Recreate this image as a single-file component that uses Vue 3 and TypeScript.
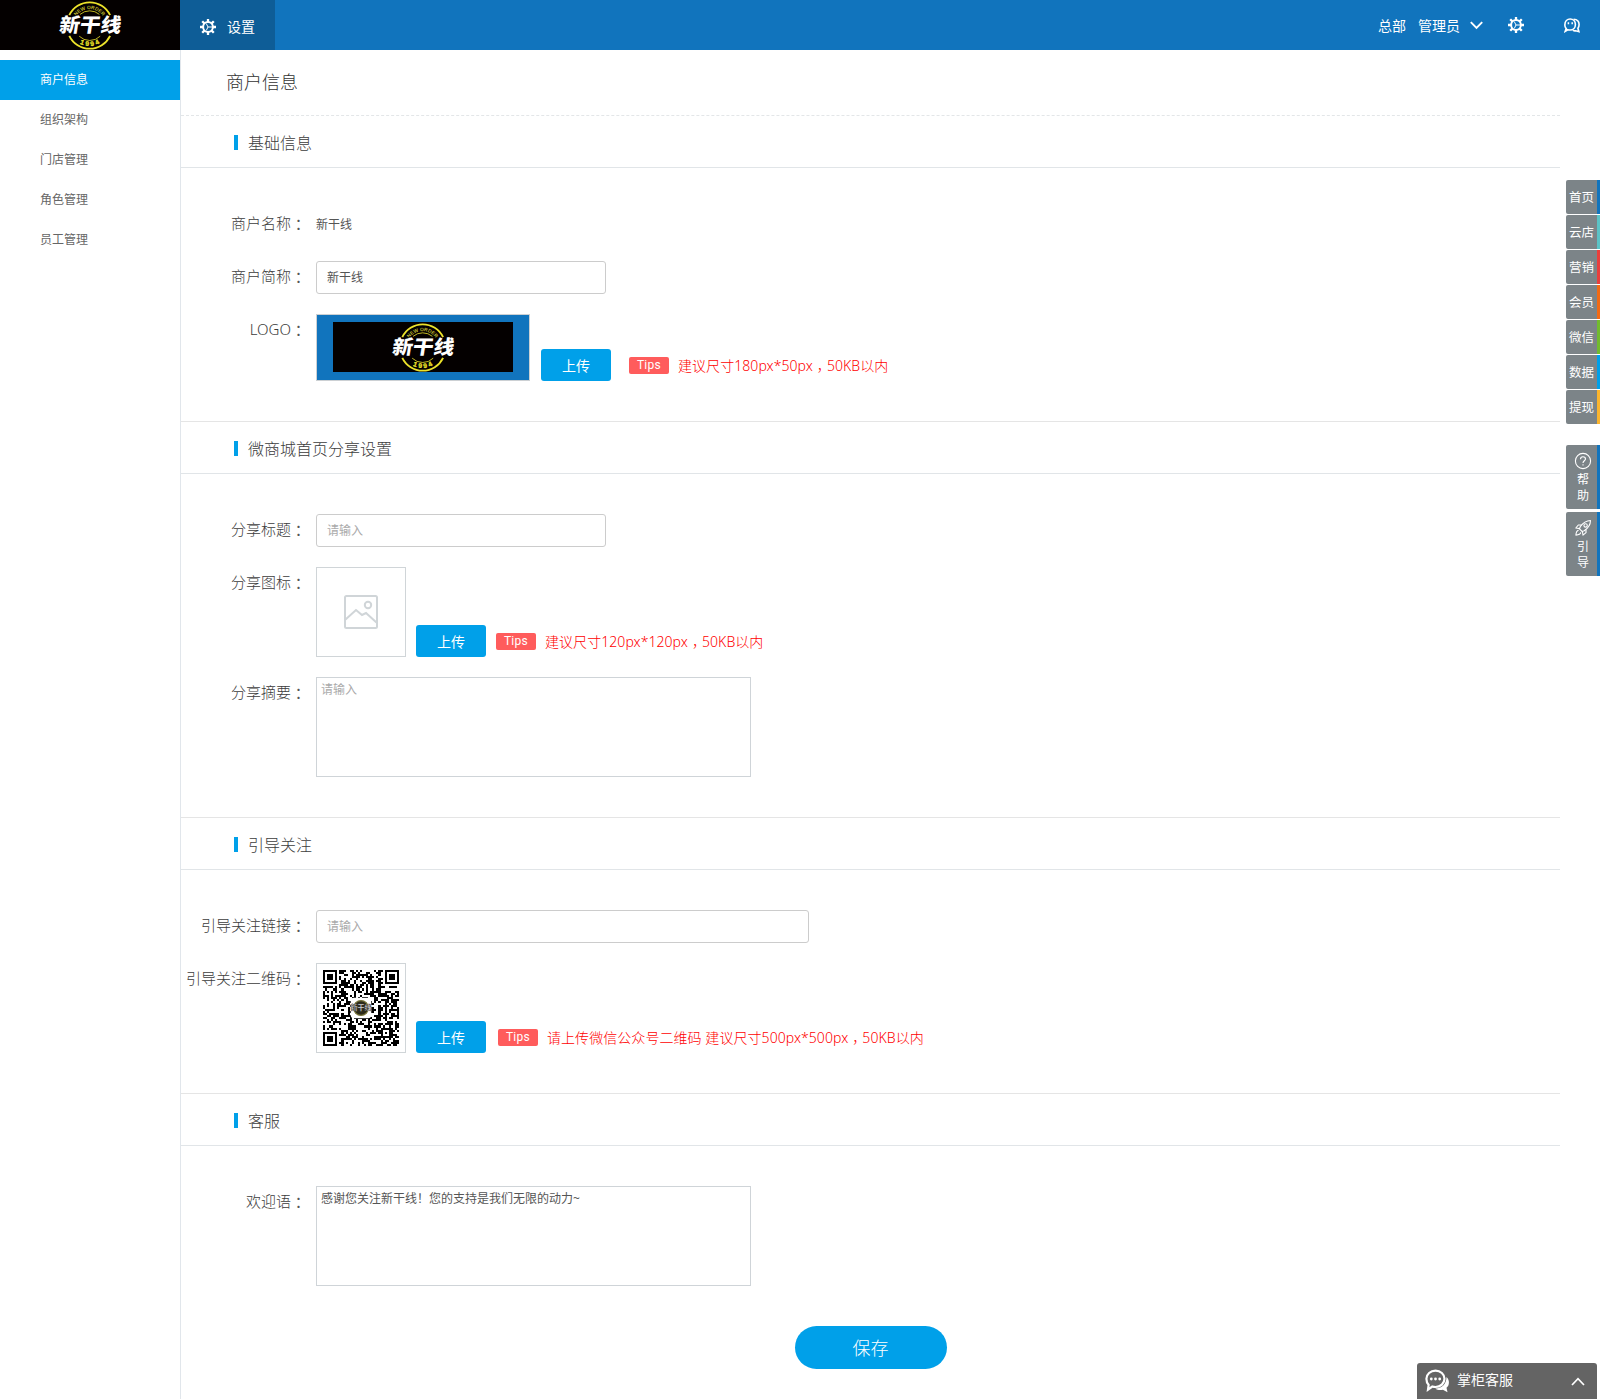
<script setup lang="ts">
import { ref } from 'vue'

interface QuickLink {
  label: string
  color: string
}

const menu: string[] = ['商户信息', '组织架构', '门店管理', '角色管理', '员工管理']
const activeMenu = ref('商户信息')

const quickLinks: QuickLink[] = [
  { label: '首页', color: '#1174bd' },
  { label: '云店', color: '#5bc3c6' },
  { label: '营销', color: '#ea3f3c' },
  { label: '会员', color: '#f26a14' },
  { label: '微信', color: '#72bb2e' },
  { label: '数据', color: '#00a0e9' },
  { label: '提现', color: '#fcb52d' },
]

const shortName = ref('新干线')
const shareTitle = ref('')
const shareSummary = ref('')
const followLink = ref('')
const welcome = ref('感谢您关注新干线！您的支持是我们无限的动力~')

const QR_SIZE = 37

function finderCell(x: number, y: number): boolean | null {
  const corners = [[0, 0], [QR_SIZE - 7, 0], [0, QR_SIZE - 7]]
  for (const [cx, cy] of corners) {
    const dx = x - cx
    const dy = y - cy
    if (dx >= -1 && dx <= 7 && dy >= -1 && dy <= 7) {
      const d = Math.max(Math.abs(dx - 3), Math.abs(dy - 3))
      return d === 3 || d <= 1
    }
  }
  const a = Math.max(Math.abs(x - 30), Math.abs(y - 30))
  if (a <= 2) return a !== 1
  return null
}

function buildQr(): string {
  let seed = 20261
  let d = ''
  for (let y = 0; y < QR_SIZE; y++) {
    for (let x = 0; x < QR_SIZE; x++) {
      seed = (seed * 1103515245 + 12345) % 2147483648
      const fixed = finderCell(x, y)
      const dark = fixed !== null ? fixed : (seed >> 12) % 100 < 51
      if (dark) d += `M${x} ${y}h1v1h-1z`
    }
  }
  return d
}

const qrPath = buildQr()
</script>

<template>
  <div class="page">
    <svg class="defs" width="0" height="0" aria-hidden="true">
      <defs>
        <path id="arc-top" d="M73.1 25.500a16.400 16.400 0 0 1 32.800 0" />
        <path id="arc-bottom" d="M68.900 25.500a20.600 20.600 0 0 0 41.200 0" />
        <symbol id="brand" viewBox="0 0 180 50">
          <rect width="180" height="50" fill="#040000" />
          <g fill="none" stroke="#ece22a">
            <path d="M69.300 15.200a22.600 22.600 0 0 1 40.800 0M69.300 35.800a22.600 22.600 0 0 0 40.800 0" stroke-width="1.900" />
            <path d="M80 14.400a15 15 0 0 1 19.400 0M79.200 36.200a15 15 0 0 0 21 0" stroke-width=".8" />
          </g>
          <text font-family="Liberation Sans, sans-serif" font-weight="700" font-size="5" fill="#bdb52c" text-anchor="middle">
            <textPath href="#arc-top" startOffset="50%">NEW ORDER</textPath>
          </text>
          <text font-family="Liberation Sans, sans-serif" font-weight="700" font-size="6.600" letter-spacing="2" fill="#ece22a" stroke="#ece22a" stroke-width=".3" text-anchor="middle">
            <textPath href="#arc-bottom" startOffset="52%">1994</textPath>
          </text>
          <text transform="translate(58.500 32.300) skewX(-9) scale(1.030 .98)" font-family="Noto Sans CJK SC, sans-serif" font-weight="900" font-size="20" fill="#fff">新干线</text>
        </symbol>
        <symbol id="gear" viewBox="0 0 16 16">
          <g fill="none" stroke="#fff">
            <circle cx="8" cy="8" r="4.900" stroke-width="2" />
            <path d="M8 0v3M8 13v3M0 8h3M13 8h3M2.200 2.200l2.200 2.200M11.600 11.600l2.200 2.200M2.200 13.800l2.200-2.200M11.600 4.400l2.200-2.200" stroke-width="2.300" />
            <path d="M6.300 4.600L8 8L6.300 11.400M8 8h4" stroke-width="1" />
          </g>
        </symbol>
      </defs>
    </svg>

    <header class="topbar">
      <svg class="brand" width="180" height="50"><use href="#brand" /></svg>
      <div class="tab">
        <svg width="16" height="16"><use href="#gear" /></svg>
        <span>设置</span>
      </div>
      <div class="account">
        <span>总部</span>
        <span class="role">管理员</span>
        <svg class="chev" width="13" height="9" viewBox="0 0 13 9"><path d="M.8 1.200l5.700 5.800 5.700-5.800" fill="none" stroke="#fff" stroke-width="1.900" /></svg>
        <svg class="gear" width="16" height="16"><use href="#gear" /></svg>
        <svg class="chat" width="16" height="15" viewBox="0 0 16 15" fill="none" stroke="#fff" stroke-width="1.600">
          <path d="M1.200 13.300l1-2.700A5.300 5.300 0 0 1 .9 6.500C.9 3.300 3.200 1 6.200 1s5.200 2.400 5.200 5.500-2.200 5.500-5.200 5.500c-.9 0-1.700 0-2.400-.3z" />
          <path d="M9.600 1.200c3.300.1 5.500 2.300 5.500 5.400 0 1.500-.5 2.800-1.200 3.700l1 3.300-3.300-.8c-1.100.2-1.900 0-2.700-.4" />
          <path d="M4.400 4.300v2M8.200 4.300v2" stroke-width="1.500" />
        </svg>
      </div>
    </header>

    <div class="layout">
      <nav class="side">
        <a v-for="item in menu" :key="item" :class="{ active: item === activeMenu }" @click="activeMenu = item">{{ item }}</a>
      </nav>

      <main class="main">
        <h1>商户信息</h1>

        <section>
          <h2 class="dashed"><i></i>基础信息</h2>
          <div class="body">
            <div class="row">
              <label>商户名称<b>：</b></label>
              <span class="plain">新干线</span>
            </div>
            <div class="row">
              <label>商户简称<b>：</b></label>
              <input v-model="shortName" type="text" />
            </div>
            <div class="row">
              <label>LOGO<b>：</b></label>
              <div class="logo-box"><svg width="180" height="50"><use href="#brand" /></svg></div>
              <button class="upload far" type="button">上传</button>
              <span class="tips wide">Tips</span>
              <span class="hint">建议尺寸180px*50px<b>，</b>50KB以内</span>
            </div>
          </div>
        </section>

        <section>
          <h2><i></i>微商城首页分享设置</h2>
          <div class="body">
            <div class="row">
              <label>分享标题<b>：</b></label>
              <input v-model="shareTitle" type="text" placeholder="请输入" />
            </div>
            <div class="row">
              <label>分享图标<b>：</b></label>
              <div class="thumb">
                <svg width="34" height="34" viewBox="0 0 34 34" fill="none" stroke="#d0d5d8" stroke-width="2">
                  <rect x="1" y="1" width="32" height="32" rx="1.500" />
                  <circle cx="24" cy="10" r="3.200" />
                  <path d="M1.500 24.500L12 15l6 5 4-2 10.500 9.500" />
                </svg>
              </div>
              <button class="upload" type="button">上传</button>
              <span class="tips">Tips</span>
              <span class="hint">建议尺寸120px*120px<b>，</b>50KB以内</span>
            </div>
            <div class="row">
              <label>分享摘要<b>：</b></label>
              <textarea v-model="shareSummary" placeholder="请输入"></textarea>
            </div>
          </div>
        </section>

        <section>
          <h2><i></i>引导关注</h2>
          <div class="body">
            <div class="row">
              <label>引导关注链接<b>：</b></label>
              <input v-model="followLink" class="long" type="text" placeholder="请输入" />
            </div>
            <div class="row">
              <label>引导关注二维码<b>：</b></label>
              <div class="thumb">
                <svg width="76" height="76" viewBox="0 0 37 37">
                  <path :d="qrPath" fill="#000" shape-rendering="crispEdges" />
                  <rect x="13.500" y="13.500" width="10" height="10" rx="1.500" fill="#fff" />
                  <circle cx="18.500" cy="18.500" r="3.600" fill="#2b2a1a" stroke="#77733a" stroke-width=".6" />
                  <text x="18.500" y="19.700" font-family="Noto Sans CJK SC, sans-serif" font-weight="900" font-size="3.400" fill="#ddd" stroke="#333" stroke-width=".15" text-anchor="middle">新干线</text>
                </svg>
              </div>
              <button class="upload" type="button">上传</button>
              <span class="tips mid">Tips</span>
              <span class="hint">请上传微信公众号二维码 建议尺寸500px*500px<b>，</b>50KB以内</span>
            </div>
          </div>
        </section>

        <section>
          <h2><i></i>客服</h2>
          <div class="body">
            <div class="row">
              <label>欢迎语<b>：</b></label>
              <textarea v-model="welcome"></textarea>
            </div>
          </div>
        </section>

        <button class="save" type="button">保存</button>
      </main>
    </div>

    <aside class="float">
      <a v-for="q in quickLinks" :key="q.label" class="quick" :style="{ borderRightColor: q.color }">{{ q.label }}</a>
      <a class="tool first">
        <svg width="18" height="18" viewBox="0 0 18 18" fill="none" stroke="#fff" stroke-width="1.100">
          <circle cx="9" cy="9" r="7.600" />
          <path d="M6.500 7.200c0-1.500 1.100-2.400 2.500-2.400s2.500.9 2.500 2.200c0 1.700-2.500 1.900-2.500 4M9 12.300v1.200" />
        </svg>
        <span>帮</span><span>助</span>
      </a>
      <a class="tool">
        <svg width="18" height="18" viewBox="0 0 18 18" fill="none" stroke="#fff" stroke-width="1.100" stroke-linejoin="round">
          <path d="M16.500 1.500c-4.300 0-7.500 2.200-10.300 6.300l-.7 2 2.700 2.700 2-.7c4.100-2.800 6.300-6 6.300-10.300z" />
          <circle cx="11.600" cy="6.400" r="1.700" />
          <path d="M7.500 6H4.300L1.800 9l3.900.6M12 10.500v3.200L9 16.200l-.6-3.900M4.600 11.200c-1.700.3-2.500 1.700-2.700 4.900 3.200-.2 4.600-1 4.900-2.700" />
        </svg>
        <span>引</span><span>导</span>
      </a>
    </aside>

    <div class="service">
      <svg width="25" height="24" viewBox="0 0 25 24">
        <path d="M21.500 8c3.500 3.500 3 8.500 0 10.800l1 4.500-4.600-2.500c-3 .5-6 .2-7.600-1.300 6.500 0 11.200-4.500 11.200-11.500z" fill="#fff" />
        <path d="M10.500 1.600c5 0 9 3.600 9 8.200s-4 8.200-9 8.200c-1.200 0-2.200-.2-3.200-.5L3 20.600l.6-4.800C2.100 14.300 1.400 12.200 1.400 9.800c0-4.600 4.100-8.200 9.100-8.200z" fill="#646464" stroke="#fff" stroke-width="2.200" />
        <g fill="#fff"><circle cx="6.300" cy="10" r="1.400" /><circle cx="10.500" cy="10" r="1.400" /><circle cx="14.700" cy="10" r="1.400" /></g>
      </svg>
      <span>掌柜客服</span>
      <svg width="14" height="9" viewBox="0 0 14 9"><path d="M1 8l6-6.300L13 8" fill="none" stroke="#fff" stroke-width="1.700" /></svg>
    </div>
  </div>
</template>

<style>
body {
  background: #fff;
}
</style>

<style scoped>
.page {
  position: relative;
  height: 1399px;
  overflow: hidden;
  color: #555;
  font-family: "Noto Sans", "Noto Sans CJK SC", sans-serif;
  font-size: 12px;
}
.page * {
  box-sizing: border-box;
}
.defs {
  position: absolute;
}
svg {
  display: block;
  flex: none;
}
.topbar {
  display: flex;
  height: 50px;
  background: #1174bd;
  color: #fff;
  font-size: 14px;
}
.tab {
  display: flex;
  align-items: center;
  width: 95px;
  padding: 4px 0 0 20px;
  gap: 11px;
  background: #0e5d97;
}
.tab span {
  line-height: 20px;
}
.account {
  display: flex;
  align-items: center;
  margin-left: auto;
  padding-right: 20px;
}
.role {
  margin-left: 12px;
}
.account span {
  line-height: 20px;
  margin-top: 1px;
}
.chev {
  margin-left: 10px;
}
.account .gear {
  margin-left: 25px;
}
.chat {
  margin-left: 40px;
}
.layout {
  display: flex;
  height: 1349px;
}
.side {
  width: 181px;
  padding-top: 10px;
  border-right: 1px solid #e1e6eb;
}
.side a {
  display: block;
  height: 40px;
  padding-left: 40px;
  color: #666;
  line-height: 40px;
}
.side a.active {
  background: #00a0e9;
  color: #fff;
}
.main {
  width: 1379px;
}
h1 {
  height: 65px;
  margin: 0;
  padding-left: 45px;
  color: #333;
  font-size: 18px;
  font-weight: 300;
  line-height: 64px;
}
h2 {
  display: flex;
  align-items: center;
  gap: 10px;
  height: 53px;
  margin: 0;
  padding-left: 53px;
  border-top: 1px solid #e5e5e5;
  border-bottom: 1px solid #e1e5e8;
  color: #3c3c3c;
  font-size: 16px;
  font-weight: 300;
}
h2.dashed {
  border-top: 1px dashed #e3e6e8;
}
h2 i {
  width: 4px;
  height: 15px;
  margin-top: 1px;
  background: #00a0e9;
}
.body {
  display: flex;
  flex-direction: column;
  gap: 20px;
  padding: 40px 0;
}
.row {
  display: flex;
  align-items: flex-end;
  min-height: 33px;
}
label {
  align-self: flex-start;
  width: 125px;
  margin-right: 10px;
  color: #3c3c3c;
  font-size: 15px;
  font-weight: 300;
  line-height: 31px;
  text-align: right;
  white-space: nowrap;
}
b {
  color: #555;
  font-family: "Noto Sans CJK TC", sans-serif;
  font-weight: 400;
  line-height: 1;
  vertical-align: -1px;
}
.plain {
  line-height: 33px;
}
input,
textarea {
  margin: 0;
  border: 1px solid #ccc;
  outline: 0;
  background: #fff;
  color: #555;
  font: 12px "Noto Sans", "Noto Sans CJK SC", sans-serif;
  resize: none;
}
input {
  width: 290px;
  height: 33px;
  padding: 0 10px 1px;
  border-radius: 3px;
}
input.long {
  width: 493px;
}
textarea {
  width: 435px;
  height: 100px;
  padding: 3px 4px;
  border-color: #cfd4d8;
  line-height: 18px;
}
::placeholder {
  color: #aaa;
  opacity: 1;
}
.logo-box {
  display: flex;
  align-items: center;
  justify-content: center;
  width: 214px;
  height: 67px;
  padding-bottom: 1px;
  border: 1px solid #ccd0d3;
  background: #1174bd;
}
.thumb {
  display: flex;
  align-items: center;
  justify-content: center;
  width: 90px;
  height: 90px;
  border: 1px solid #d0d5d8;
}
.upload {
  width: 70px;
  height: 32px;
  margin: 0 0 0 10px;
  padding: 0 0 1px;
  border: 0;
  border-radius: 3px;
  background: #00a0e9;
  color: #fff;
  font: 14px "Noto Sans CJK SC", sans-serif;
}
.upload.far {
  margin-left: 11px;
}
.tips {
  width: 40px;
  height: 17px;
  margin: 0 9px 7px 10px;
  border-radius: 2px;
  background: #ff5c5c;
  color: #fff;
  font-family: Roboto, sans-serif;
  font-size: 12px;
  letter-spacing: .3px;
  line-height: 16px;
  text-align: center;
}
.tips.wide {
  margin-left: 18px;
}
.tips.mid {
  margin-left: 12px;
}
.hint {
  margin-bottom: 5px;
  color: #f00;
  font-size: 14px;
  font-weight: 300;
  line-height: 20px;
  letter-spacing: .06px;
  white-space: nowrap;
}
.hint b {
  color: inherit;
  font-weight: 300;
  vertical-align: -4px;
}
.save {
  display: block;
  width: 152px;
  height: 43px;
  margin: 0 auto;
  padding: 0 0 2px;
  border: 0;
  border-radius: 22px;
  background: #00a0e9;
  color: #fff;
  font: 300 18px "Noto Sans CJK SC", sans-serif;
}
.float {
  position: absolute;
  top: 180px;
  right: 0;
  display: flex;
  flex-direction: column;
  gap: 1px;
  width: 34px;
  color: #fff;
}
.quick {
  height: 34px;
  padding-left: 3px;
  border-right: 3px solid;
  border-radius: 2px 0 0 2px;
  background: #7c8488;
  font-size: 12.5px;
  line-height: 35px;
  white-space: nowrap;
}
.tool {
  display: flex;
  flex-direction: column;
  align-items: center;
  height: 64px;
  margin-top: 2px;
  padding: 7px 0 0 3px;
  border-right: 3px solid #1174bd;
  border-radius: 2px 0 0 2px;
  background: #7c8488;
  line-height: 16px;
}
.tool.first {
  margin-top: 20px;
}
.tool svg {
  margin-bottom: 2px;
}
.service {
  position: absolute;
  right: 3px;
  bottom: 0;
  display: flex;
  align-items: center;
  width: 180px;
  height: 36px;
  padding: 0 12px 0 8px;
  border-radius: 3px 3px 0 0;
  background: #646464;
  color: #fff;
  font-size: 14px;
}
.service span {
  flex: 1;
  margin-left: 7px;
  line-height: 34px;
  margin-top: -2px;
}
</style>
